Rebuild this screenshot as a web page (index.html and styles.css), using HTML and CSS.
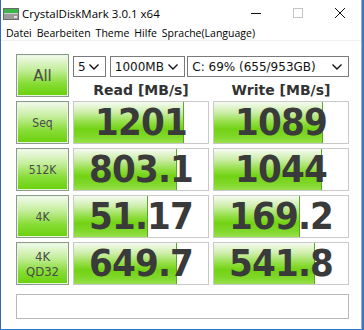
FILE: index.html
```html
<!DOCTYPE html>
<html>
<head>
<meta charset="utf-8">
<link rel="stylesheet" href="styles.css">
</head>
<body>
<div class="window">
  <div class="titlebar">
    <svg class="appicon" width="16" height="12" viewBox="0 0 16 12">
      <rect x="0.5" y="0.5" width="15" height="11" fill="#9a9a9a" stroke="#6a6a6a"/>
      <rect x="1" y="1" width="14" height="4" fill="#3cb44a"/>
      <rect x="1" y="5" width="14" height="1" fill="#d0d0d0"/>
      <rect x="11" y="8" width="3" height="2" fill="#e0e0e0"/>
    </svg>
    <span class="title">CrystalDiskMark 3.0.1 x64</span>
    <div class="controls">
      <svg width="10" height="10" viewBox="0 0 10 10"><path d="M0 5.5H10" stroke="#111" stroke-width="1"/></svg>
      <svg width="10" height="10" viewBox="0 0 10 10"><rect x="0.5" y="0.5" width="9" height="9" fill="none" stroke="#c4c4c4"/></svg>
      <svg width="10" height="10" viewBox="0 0 10 10"><path d="M0 0L10 10M10 0L0 10" stroke="#111" stroke-width="1"/></svg>
    </div>
  </div>
  <div class="menubar">
    <span>Datei</span><span>Bearbeiten</span><span>Theme</span><span>Hilfe</span><span>Sprache(Language)</span>
  </div>
  <div class="content">
    <div class="grid">
      <div class="btn btn-all">All</div>
      <div class="topright">
        <div class="selects">
          <div class="select s-count"><span>5</span><svg width="12" height="8" viewBox="0 0 12 8"><path d="M1.5 1.5L6 6L10.5 1.5" fill="none" stroke="#111" stroke-width="1.4"/></svg></div>
          <div class="select s-size"><span>1000MB</span><svg width="12" height="8" viewBox="0 0 12 8"><path d="M1.5 1.5L6 6L10.5 1.5" fill="none" stroke="#111" stroke-width="1.4"/></svg></div>
          <div class="select s-drive"><span>C: 69% (655/953GB)</span><svg width="12" height="8" viewBox="0 0 12 8"><path d="M1.5 1.5L6 6L10.5 1.5" fill="none" stroke="#111" stroke-width="1.4"/></svg></div>
        </div>
        <div class="heads">
          <div class="head">Read [MB/s]</div>
          <div class="head">Write [MB/s]</div>
        </div>
      </div>

      <div class="btn">Seq</div>
      <div class="cell"><div class="bar" style="width:109px"></div><span class="num">1201</span></div>
      <div class="cell"><div class="bar" style="width:108px"></div><span class="num">1089</span></div>

      <div class="btn">512K</div>
      <div class="cell"><div class="bar" style="width:102px"></div><span class="num">803.1</span></div>
      <div class="cell"><div class="bar" style="width:107px"></div><span class="num">1044</span></div>

      <div class="btn">4K</div>
      <div class="cell"><div class="bar" style="width:73px"></div><span class="num">51.17</span></div>
      <div class="cell"><div class="bar" style="width:85px"></div><span class="num">169.2</span></div>

      <div class="btn btn-two">4K<br>QD32</div>
      <div class="cell"><div class="bar" style="width:102px"></div><span class="num">649.7</span></div>
      <div class="cell"><div class="bar" style="width:100px"></div><span class="num">541.8</span></div>
    </div>
    <div class="comment"></div>
  </div>
</div>
</body>
</html>
```
FILE: styles.css
```css
html, body {
  margin: 0;
  padding: 0;
  background: #3a78c0;
}
body {
  width: 364px;
  height: 330px;
  overflow: hidden;
}
.window {
  box-sizing: border-box;
  width: 362px;
  height: 330px;
  background: #ffffff;
  border-left: 1px solid #2b6cb4;
  border-right: 1px solid #8fb4dc;
  border-bottom: 1px solid #2b78d0;
  font-family: "Open Sans", "DejaVu Sans", sans-serif;
  color: #000;
}
.titlebar {
  height: 26px;
  display: flex;
  align-items: center;
  padding-left: 2px;
}
.appicon {
  margin-right: 3px;
  margin-top: 2px;
}
.title {
  font-size: 11.5px;
  margin-top: 1px;
}
.controls {
  margin-left: auto;
  display: flex;
  gap: 32px;
  padding-right: 16px;
  align-items: center;
}
.menubar {
  height: 14px;
  display: flex;
  gap: 5px;
  padding-left: 5px;
  font-size: 10.5px;
  line-height: 14px;
  border-bottom: 1px solid #f0f0f0;
}
.content {
  padding: 13px 0 0 15px;
}
.grid {
  display: grid;
  grid-template-columns: 53px 136px 136px;
  grid-auto-rows: 43px;
  column-gap: 4px;
  row-gap: 4px;
}
.btn {
  box-sizing: border-box;
  border: 1px solid #8c9a8c;
  box-shadow: inset 0 0 0 1px #e8f6e0;
  background: linear-gradient(#f2faee 0%, #c6ee9e 35%, #86dc34 70%, #6ad00c 100%);
  display: flex;
  align-items: center;
  justify-content: center;
  text-align: center;
  font-family: "DejaVu Sans Condensed", "DejaVu Sans", sans-serif;
  font-size: 12px;
  color: #4a4a4a;
  line-height: 16px;
}
.btn-all {
  font-size: 15px;
  font-family: "DejaVu Sans", sans-serif;
}
.btn-two {
  line-height: 15px;
  font-size: 13px;
  padding-top: 1px;
}
.topright {
  grid-column: 2 / span 2;
  display: flex;
  flex-direction: column;
}
.selects {
  display: flex;
  gap: 4px;
  margin-top: 2px;
}
.select {
  box-sizing: border-box;
  height: 21px;
  border: 1px solid #7a7a7a;
  background: #fff;
  display: flex;
  align-items: center;
  justify-content: space-between;
  padding: 0 5px 0 4px;
  font-family: "DejaVu Sans", sans-serif;
  font-size: 12px;
  color: #111;
}
.s-count { width: 33px; }
.s-size { width: 76px; }
.s-drive { width: 163px; margin-left: -2px; }
.heads {
  display: flex;
  gap: 4px;
  margin-top: 5px;
}
.head {
  width: 136px;
  text-align: center;
  font-family: "DejaVu Sans", sans-serif;
  font-weight: bold;
  font-size: 14px;
  color: #333;
  line-height: 16px;
}
.cell {
  position: relative;
  box-sizing: border-box;
  border: 1px solid #c9c9c9;
  background: #fff;
  display: flex;
  align-items: center;
  justify-content: center;
  overflow: hidden;
}
.bar {
  position: absolute;
  left: 0;
  top: 0;
  bottom: 0;
  background: linear-gradient(#f6fbf2 0%, #cdeeaa 25%, #92de42 50%, #72d214 66%, #80d82a 85%, #98e04c 100%);
  border-right: 1px solid #5aa82a;
}
.num {
  position: relative;
  font-family: "DejaVu Sans Condensed", "DejaVu Sans", sans-serif;
  font-weight: bold;
  font-size: 38px;
  color: #3a3a3a;
  line-height: 43px;
  letter-spacing: -0.8px;
}
.comment {
  box-sizing: border-box;
  width: 333px;
  height: 25px;
  margin-top: 9px;
  border: 1px solid #b8b8b8;
  background: #fff;
}
```
